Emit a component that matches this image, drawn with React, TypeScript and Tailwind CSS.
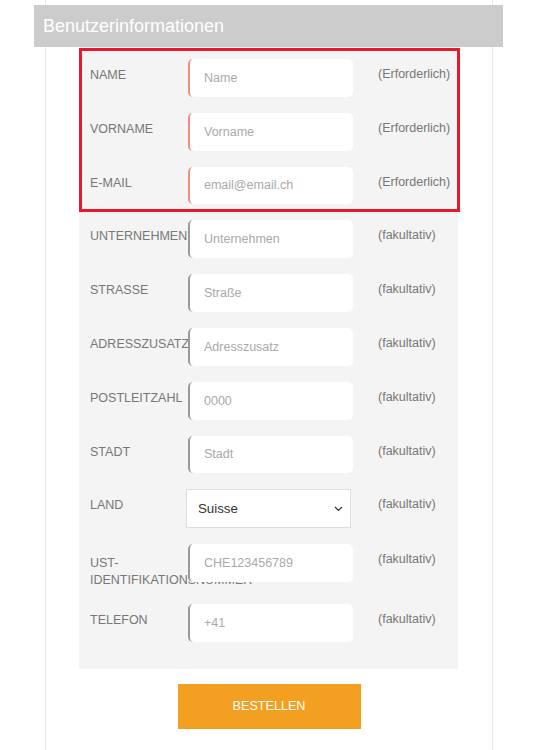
import React from "react";

type Row = { label: string; placeholder: string; note: string };

const required: Row[] = [
  { label: "NAME", placeholder: "Name", note: "(Erforderlich)" },
  { label: "VORNAME", placeholder: "Vorname", note: "(Erforderlich)" },
  { label: "E-MAIL", placeholder: "email@email.ch", note: "(Erforderlich)" },
];

const optionalA: Row[] = [
  { label: "UNTERNEHMEN", placeholder: "Unternehmen", note: "(fakultativ)" },
  { label: "STRASSE", placeholder: "Straße", note: "(fakultativ)" },
  { label: "ADRESSZUSATZ", placeholder: "Adresszusatz", note: "(fakultativ)" },
  { label: "POSTLEITZAHL", placeholder: "0000", note: "(fakultativ)" },
  { label: "STADT", placeholder: "Stadt", note: "(fakultativ)" },
];

const optionalB: Row[] = [
  { label: "UST-IDENTIFIKATIONSNUMMER", placeholder: "CHE123456789", note: "(fakultativ)" },
  { label: "TELEFON", placeholder: "+41", note: "(fakultativ)" },
];

function Label({ text }: { text: string }) {
  const long = text.length > 14;
  return (
    <div
      className={
        long
          ? "w-[98px] shrink-0 pt-[11px] pb-0 text-[12.5px] leading-[16.6px] text-[#777777]"
          : "w-[98px] shrink-0 pt-[8px] pb-[2px] text-[12.5px] leading-[17px] text-[#777777]"
      }
    >
      {text}
    </div>
  );
}

function Note({ text }: { text: string }) {
  return (
    <div className="ml-[25px] shrink-0 pt-[7px] text-[12.5px] leading-[17px] text-[#777777] whitespace-nowrap">
      {text}
    </div>
  );
}

function FieldRow({ row, req }: { row: Row; req: boolean }) {
  return (
    <div className="flex items-start">
      <Label text={row.label} />
      <input
        type="text"
        placeholder={row.placeholder}
        className={
          "relative h-[37.8px] w-[165px] shrink-0 rounded-[5px] border-l-2 bg-white pl-[14px] text-[12.5px] text-[#555] outline-none placeholder:text-[#a9a9a9] " +
          (req ? "border-[#f58b7c]" : "border-[#9a9a9a]")
        }
        style={{ fontFamily: "'Liberation Sans', Arial, sans-serif" }}
      />
      <Note text={row.note} />
    </div>
  );
}

export default function App() {
  return (
    <div
      className="min-h-[750px] w-full bg-white"
      style={{ fontFamily: "'Liberation Sans', Arial, sans-serif" }}
    >
      <div className="ml-[45px] min-h-[750px] w-[448px] border-x border-[#e6e6e6] pt-[5px]">
        <div className="ml-[-12px] mr-[-11px] flex h-[42px] items-center bg-[#cccccc] pl-[9px] text-[18px] text-white">
          Benutzerinformationen
        </div>

        <div className="ml-[33px] w-[379px] bg-[#f4f4f4] pt-[1px] pb-[27px]">
          <div className="flex w-[381px] flex-col gap-[16px] border-[3px] border-[#e8192c] pt-[8px] pb-[5px] pl-[8px]">
            {required.map((r) => (
              <FieldRow key={r.label} row={r} req />
            ))}
          </div>

          <div className="flex flex-col gap-[16px] pt-[8px] pl-[11px]">
            {optionalA.map((r) => (
              <FieldRow key={r.label} row={r} req={false} />
            ))}

            <div className="flex items-start">
              <Label text="LAND" />
              <div className="relative ml-[-2px] mt-[-0.5px] h-[39.4px] w-[165px] shrink-0 border border-[#dedede] bg-white">
                <select
                  defaultValue="Suisse"
                  className="h-full w-full appearance-none bg-transparent pl-[11px] text-[13.3px] text-[#333333] outline-none"
                  style={{ fontFamily: "'Liberation Sans', Arial, sans-serif" }}
                >
                  <option>Suisse</option>
                </select>
                <svg
                  className="pointer-events-none absolute right-[7px] top-[16px]"
                  width="9"
                  height="6"
                  viewBox="0 0 9 6"
                  fill="none"
                >
                  <path d="M1 1 L4.5 4.5 L8 1" stroke="#333" strokeWidth="1.2" />
                </svg>
              </div>
              <div className="ml-[2px]">
                <Note text="(fakultativ)" />
              </div>
            </div>

            {optionalB.map((r) => (
              <FieldRow key={r.label} row={r} req={false} />
            ))}
          </div>
        </div>

        <div className="mt-[15px] flex justify-center">
          <button className="flex h-[45px] w-[183px] items-center justify-center bg-[#f39f22] text-[12.6px] text-white">
            BESTELLEN
          </button>
        </div>
      </div>
    </div>
  );
}
